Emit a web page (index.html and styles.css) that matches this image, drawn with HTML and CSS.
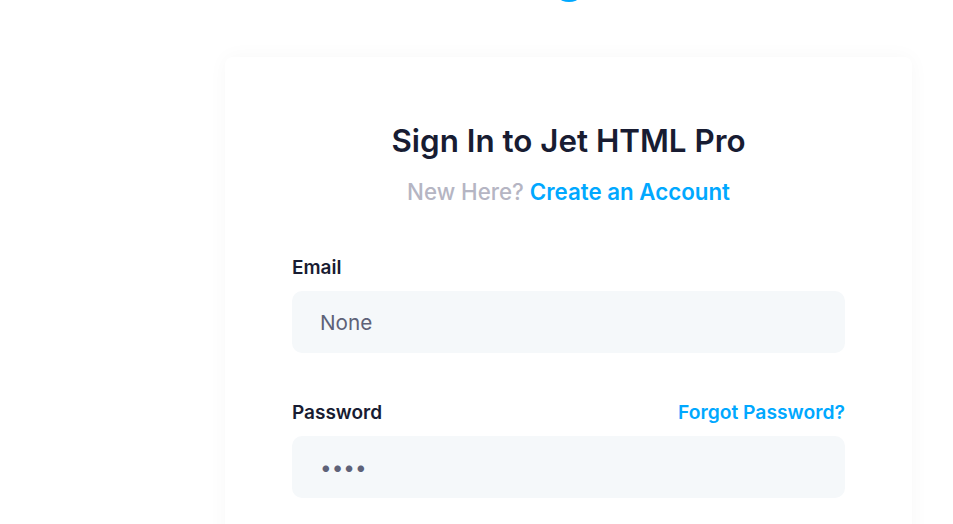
FILE: index.html
```html
<!DOCTYPE html>
<html lang="en">
<head>
<meta charset="utf-8">
<title>Sign In</title>
<link rel="stylesheet" href="styles.css">
</head>
<body>
<div class="page">
  <div class="column">
    <div class="logo"><svg width="40" height="40" viewBox="0 0 40 40"><circle cx="20" cy="22" r="18" fill="#00a8ff"/></svg></div>
    <div class="card">
      <h1 class="title">Sign In to Jet HTML Pro</h1>
      <p class="subtitle"><span class="muted">New Here?</span> <a class="link" href="#">Create an Account</a></p>
      <div class="field">
        <div class="label-row"><label class="label">Email</label></div>
        <input class="input" type="text" value="None">
      </div>
      <div class="field">
        <div class="label-row"><label class="label">Password</label><a class="link small" href="#">Forgot Password?</a></div>
        <input class="input" type="password" value="1234">
      </div>
    </div>
  </div>
</div>
</body>
</html>
```
FILE: styles.css
```css
html, body { margin: 0; padding: 0; background: #ffffff; overflow: hidden; }
body { font-family: Inter, "Noto Sans", sans-serif; color: #181c32; }
.page { display: flex; padding: 0 41px 0 225px; }
.column { flex: 1; display: flex; flex-direction: column; align-items: stretch; }
.logo { display: flex; justify-content: center; height: 40px; margin-top: -38px; margin-bottom: 55px; }
.logo svg { display: block; }
.card { background: #fff; border-radius: 8px; box-shadow: 0 0 20px rgba(0,0,0,0.035); padding: 65px 67px 40px; min-height: 600px; }
.title { margin: 0; text-align: center; font-size: 31.35px; line-height: 38px; font-weight: 600; color: #181c32; }
.subtitle { margin: 16px 0 0; text-align: center; font-size: 22.3px; line-height: 32px; font-weight: 500; }
.muted { color: #b5b5c3; }
.link { color: #00a8ff; text-decoration: none; font-weight: 600; }
.small { font-size: 19.3px; }
.field { margin-top: 47px; }
.label-row { display: flex; justify-content: space-between; align-items: baseline; margin-bottom: 10px; }
.label { font-size: 19px; line-height: 26px; font-weight: 600; color: #181c32; }
.input { display: block; box-sizing: border-box; width: 100%; height: 62px; border: 0; outline: 0; border-radius: 10px; background: #f5f8fa; padding: 0 28px; font-family: Inter, "Noto Sans", sans-serif; font-size: 20.7px; font-weight: 400; color: #5e6278; }
```
